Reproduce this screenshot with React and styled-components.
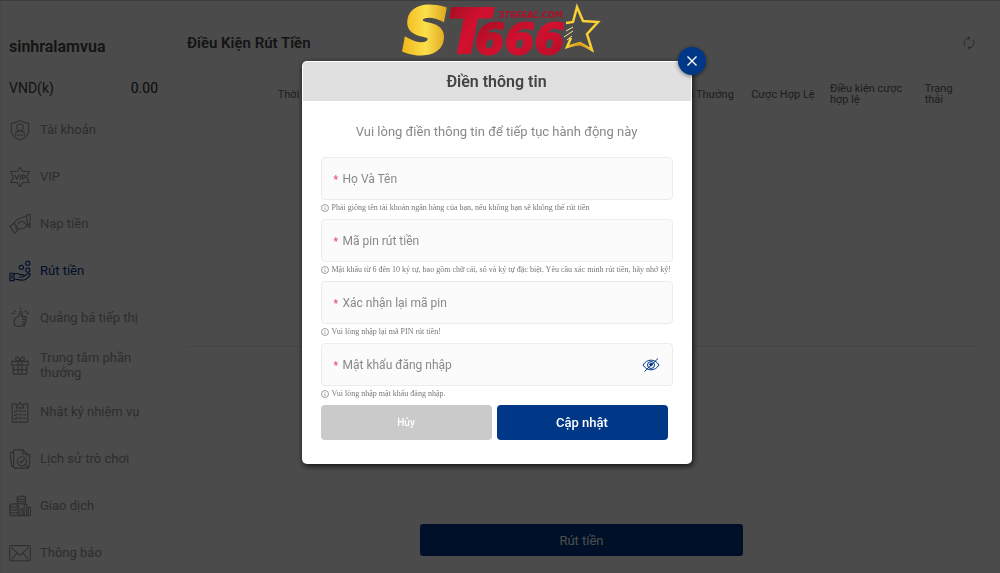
import React, { useState } from 'react';
import styled, { createGlobalStyle } from 'styled-components';

const GlobalStyle = createGlobalStyle`
  * {
    box-sizing: border-box;
  }

  body {
    margin: 0;
    background: #fafafa;
    font-family: Roboto, 'Noto Sans', sans-serif;
    font-size: 13px;
    color: #555;
  }

  button, input {
    font-family: inherit;
  }
`;

const Page = styled.div`
  display: flex;
  min-height: 100vh;
  border-top: 1px solid #ccc;
  border-left: 1px solid #eee;
`;

const Sidebar = styled.aside`
  width: 160px;
  flex-shrink: 0;
  padding: 36px 3px 0 8px;
`;

const UserName = styled.h2`
  margin: 0;
  font-size: 16px;
  font-weight: 600;
  line-height: 20px;
  color: #444;
`;

const Balance = styled.div`
  display: flex;
  justify-content: space-between;
  margin: 21px 0 8px;
  font-size: 14px;
  line-height: 20px;
  color: #444;
`;

const Amount = styled.span`
  color: #222;
`;

const NavLink = styled.a`
  display: flex;
  align-items: center;
  gap: 9px;
  height: 47px;
  font-size: 13px;
  line-height: 15px;
  text-decoration: none;
  color: ${(props) => (props.$active ? '#003787' : '#999')};

  svg {
    flex-shrink: 0;
  }
`;

const Main = styled.main`
  flex: 1;
  display: flex;
  flex-direction: column;
  padding: 32px 24px 16px 26px;
`;

const TitleBar = styled.div`
  display: flex;
  justify-content: space-between;
  align-items: center;
`;

const Title = styled.h1`
  margin: 0;
  font-size: 15px;
  font-weight: 600;
  line-height: 20px;
  color: #444;
`;

const IconButton = styled.button`
  display: flex;
  padding: 0;
  border: 0;
  background: none;
  color: #666;
`;

const TableBox = styled.div`
  min-height: 264px;
  margin-top: 30px;
  border-bottom: 1px solid #e6e6e6;
`;

const Table = styled.table`
  width: 100%;
  table-layout: fixed;
  border-collapse: collapse;

  th {
    padding: 0 8px 0 0;
    font-size: 11px;
    font-weight: normal;
    line-height: 11px;
    text-align: left;
    color: #666;
  }
`;

const WithdrawButton = styled.button`
  width: 41%;
  height: 32px;
  margin: 177px auto 0;
  border: 0;
  border-radius: 3px;
  background: #003787;
  color: #fff;
  font-size: 13px;
`;

const Overlay = styled.div`
  position: fixed;
  inset: 0;
  display: flex;
  flex-direction: column;
  align-items: center;
  padding-top: 4px;
  overflow: auto;
  background: rgba(0, 0, 0, 0.7);
`;

const Dialog = styled.div`
  position: relative;
  width: 39%;
  min-width: 320px;
  margin: 4px 7px 0 0;
  padding: 1px 1px 24px;
  border-radius: 5px;
  background: #fff;
  box-shadow: 1px 2px 6px rgba(0, 0, 0, 0.8);
`;

const DialogTitle = styled.h2`
  margin: 0;
  border-radius: 4px 4px 0 0;
  background: #e0e0e0;
  font-size: 16px;
  font-weight: 600;
  line-height: 39px;
  text-align: center;
  color: #444;
`;

const CloseButton = styled.button`
  position: absolute;
  top: -14px;
  right: -14px;
  display: flex;
  align-items: center;
  justify-content: center;
  width: 28px;
  height: 28px;
  padding: 0;
  border: 0;
  border-radius: 50%;
  background: #003787;
  color: #fff;
  box-shadow: 0 1px 4px rgba(0, 0, 0, 0.5);
`;

const Form = styled.form`
  padding: 0 18px;
`;

const Intro = styled.p`
  margin: 21px 0 15px;
  font-size: 13px;
  line-height: 20px;
  text-align: center;
  color: #888;
`;

const Field = styled.div`
  display: flex;
  align-items: center;
  height: 43px;
  padding: 0 12px;
  border: 1px solid #ececec;
  border-radius: 4px;
  background: #fbfbfb;
`;

const Required = styled.label`
  width: 9px;
  padding-top: 3px;
  font-size: 10px;
  font-weight: bold;
  line-height: 10px;
  color: #e8506e;
`;

const TextInput = styled.input`
  flex: 1;
  min-width: 0;
  padding: 0;
  border: 0;
  outline: 0;
  background: none;
  font-size: 12px;
  color: #555;

  &::placeholder {
    color: #888;
    opacity: 1;
  }
`;

const EyeButton = styled(IconButton)`
  color: #003787;
`;

const Hint = styled.p`
  display: flex;
  align-items: center;
  gap: 3px;
  height: 19px;
  margin: 0;
  padding-bottom: 4px;
  font-family: 'Liberation Serif', serif;
  font-size: 8px;
  color: #777;
  white-space: nowrap;
`;

const Actions = styled.div`
  display: flex;
  gap: 5px;
  padding-right: 5px;
`;

const ActionButton = styled.button`
  flex: 1;
  height: 35px;
  border: 0;
  border-radius: 4px;
  background: ${(props) => (props.$primary ? '#003787' : '#cacaca')};
  color: #fff;
  font-size: ${(props) => (props.$primary ? '13px' : '10px')};
  font-weight: 500;
`;

const LogoSvg = styled.svg`
  flex-shrink: 0;
  overflow: visible;
`;

const Icon = ({ children, size = 22 }) => (
  <svg
    width={size}
    height={size}
    viewBox='0 0 24 24'
    fill='none'
    stroke='currentColor'
    strokeWidth='1.2'
    strokeLinecap='round'
    strokeLinejoin='round'
    aria-hidden='true'
  >
    {children}
  </svg>
);

const icons = {
  account: (
    <>
      <path d='M12 1.5c3 2.2 6.2 2.8 9.5 3.2v7.5c0 5-4 8.5-9.5 10.8C6.5 20.7 2.5 17.2 2.5 12.2V4.7C5.8 4.3 9 3.7 12 1.5z' />
      <circle cx='12' cy='9' r='3.5' />
      <path d='M7 17.5c0-3 2-4.5 5-4.5s5 1.5 5 4.5M9 17.5h6' />
    </>
  ),
  vip: (
    <>
      <path d='M12 1.5l3.2 4.5h7l-3 6 3 6h-7L12 22.5 8.8 18h-7l3-6-3-6h7z' />
      <path d='M6.5 10l2 4.5 2-4.5M12.5 10v4.5M14.5 14.5V10h1.7a1.5 1.5 0 0 1 0 3h-1.7' />
    </>
  ),
  deposit: (
    <>
      <path d='M1 15l4.5-4 5 6.5L6.5 22z' />
      <path d='M5.5 11c2-3.5 5-5 8.5-5.5l5-2.5M10.5 17.5c4 0 7.500-.5 9-4l3-1.5' />
      <path d='M10 12c1-2.5 3.5-3 6-2.5l3.5 4M19 3l1.5-1.5h2.5v14h-2z' />
      <path d='M7 15.5l1.5 2' />
    </>
  ),
  withdraw: (
    <>
      <circle cx='20.5' cy='3.5' r='2.3' />
      <circle cx='13.5' cy='8' r='2.3' />
      <circle cx='20.5' cy='11' r='2.3' />
      <path d='M1 14.5h4.5v8H1zM3.2 16.5v3.5' />
      <path d='M5.5 15.5c3-1.5 4.5-1 6.5.5h3c2 0 2 2.5 0 2.5h-4M16.5 17.5l4-2.5c2-1 3.5.5 2 2.2-3 3.3-5 4.8-8 4.8-3.5 0-6-1.5-9-1' />
    </>
  ),
  promote: (
    <>
      <path d='M8 11.5c2.5-1 4-3 4-5.5 0-2 2.5-1.5 2.5.5 0 1.5-.3 2.7-1 4h4c1.8 0 2 2.3.5 2.8 1 .7.8 2.2-.3 2.7.8.8.5 2-.5 2.5.3 1.2-.5 2.5-1.7 2.5H9.5c-2.5 0-4-2-4-5 0-2.5.8-3.8 2.5-4.5z' />
      <path d='M12.5 1v1.5M6 4l1.5 1.2M19 4l-1.5 1.2M3.5 7h2M19.5 7h2M14.5 13.5H18M14.5 16.2H18M14.5 19H17' />
    </>
  ),
  rewards: (
    <>
      <path d='M3 8h18v4H3zM4.5 12h15v10h-15zM10 8v14M14 8v14M4.5 17h15' />
      <path d='M12 8C8 8 6.5 5.5 7.5 4s4-.5 4.5 4c.5-4.5 3.5-5.5 4.5-4S16 8 12 8z' />
    </>
  ),
  missions: (
    <>
      <path d='M8 3H3.5v20h17V3H16M8 4.5h2L12 1l2 3.5h2v3H8z' />
      <path d='M6 11l1 1 2-2M6 15l1 1 2-2M6 19l1 1 2-2M11 11h3M16 11h2M11 15h3M16 15h2M11 19h3M16 19h2' />
    </>
  ),
  history: (
    <>
      <path d='M5 19.5V2h10l4.5 4.5V9M5 4.5L1 5.5l2 14.5h2M15 2v4.5h4.5M5 19.5C5 21 6 22 7.5 22H20c2 0 2-1.5 2-3l1-11.5-3-.5' />
      <circle cx='14' cy='14.5' r='5' />
      <path d='M12 14.5l1.5 1.5 3-3.5M18 18.5l3 3' />
    </>
  ),
  transactions: (
    <>
      <ellipse cx='13.5' cy='3' rx='4.5' ry='1.8' />
      <path d='M9 3v5c0 2.3 9 2.3 9 0V3M9 5.5c0 2.3 9 2.3 9 0' />
      <ellipse cx='5.5' cy='11.5' rx='4.5' ry='1.8' />
      <path d='M1 11.5V21c0 2.3 9 2.3 9 0v-9.5M1 14.7c0 2.3 9 2.3 9 0M1 17.9c0 2.3 9 2.3 9 0M10 22.5h13.5M12 22.5V15h2.8v7.5M16.5 22.5V10h2.8v12.5M21 22.5v-9h2.5v9' />
    </>
  ),
  messages: (
    <>
      <rect x='.7' y='4' width='22.6' height='16.5' rx='1.5' />
      <path d='M3 6.5l9 8 9-8M3 18.5L9 12M21 18.5L15 12' />
    </>
  ),
};

const navItems = [
  { icon: 'account', label: 'Tài khoản' },
  { icon: 'vip', label: 'VIP' },
  { icon: 'deposit', label: 'Nạp tiền' },
  { icon: 'withdraw', label: 'Rút tiền' },
  { icon: 'promote', label: 'Quảng bá tiếp thị' },
  { icon: 'rewards', label: 'Trung tâm phần thưởng' },
  { icon: 'missions', label: 'Nhật ký nhiệm vụ' },
  { icon: 'history', label: 'Lịch sử trò chơi' },
  { icon: 'transactions', label: 'Giao dịch' },
  { icon: 'messages', label: 'Thông báo' },
];

const fields = [
  {
    name: 'fullName',
    label: 'Họ Và Tên',
    hint: 'Phải giống tên tài khoản ngân hàng của bạn, nếu không bạn sẽ không thể rút tiền',
  },
  {
    name: 'pin',
    label: 'Mã pin rút tiền',
    hint: 'Mật khẩu từ 6 đến 10 ký tự, bao gồm chữ cái, số và ký tự đặc biệt. Yêu cầu xác minh rút tiền, hãy nhớ kỹ!',
  },
  {
    name: 'pinConfirm',
    label: 'Xác nhận lại mã pin',
    hint: 'Vui lòng nhập lại mã PIN rút tiền!',
  },
  {
    name: 'password',
    label: 'Mật khẩu đăng nhập',
    hint: 'Vui lòng nhập mật khẩu đăng nhập.',
    secret: true,
  },
];

const initialValue = {
  fullName: '',
  pin: '',
  pinConfirm: '',
  password: '',
};

const Logo = () => (
  <LogoSvg width='204' height='53' viewBox='0 0 204 53' role='img' aria-label='ST666'>
    <defs>
      <linearGradient id='gold' x1='0' y1='0' x2='1' y2='0'>
        <stop offset='0' stopColor='#f2b81c' />
        <stop offset='.5' stopColor='#fbe04c' />
        <stop offset='1' stopColor='#dfa31c' />
      </linearGradient>
      <linearGradient id='red' x1='0' y1='0' x2='1' y2='1'>
        <stop offset='0' stopColor='#a00d20' />
        <stop offset='.5' stopColor='#d3102f' />
        <stop offset='1' stopColor='#b30d26' />
      </linearGradient>
    </defs>
    <g fontFamily='DejaVu Sans' fontWeight='bold' fontStyle='italic'>
      <text x='50' y='49' fontSize='60' fill='url(#red)' stroke='url(#red)' strokeWidth='3'>T</text>
      <text x='6' y='48' fontSize='60' fill='url(#gold)' stroke='url(#gold)' strokeWidth='5'>S</text>
      <text x='77' y='50' fontSize='43' fill='url(#red)' stroke='url(#red)' strokeWidth='2'>666</text>
      <text x='101' y='14' fontSize='8' fill='#b30d26'>ST666AC.COM</text>
    </g>
    <path
      d='M168 19l7-1L179 3l6 14 15 1-11 12 5 16-12-7-13 4 4-9'
      fill='none'
      stroke='#f8d033'
      strokeWidth='2.5'
    />
    <path d='M169 43l13-5 12 8-12-4.5z' fill='#e0a21a' />
    <path d='M166 33l9-6M168 27l7-4M169 36l5-4' stroke='#fbe88a' strokeWidth='1' />
  </LogoSvg>
);

const InfoIcon = () => (
  <svg width='8' height='8' viewBox='0 0 16 16' fill='none' stroke='currentColor' strokeWidth='1.4' aria-hidden='true'>
    <circle cx='8' cy='8' r='7' />
    <path d='M8 7v5M8 4v1.5' />
  </svg>
);

const App = () => {
  const [inputValue, setInputValue] = useState(initialValue);
  const [open, setOpen] = useState(true);
  const [visible, setVisible] = useState(false);

  const onChange = (e) => {
    setInputValue({ ...inputValue, [e.target.name]: e.target.value });
  };

  const onSubmit = (e) => {
    e.preventDefault();
  };

  return (
    <>
      <GlobalStyle />
      <Page>
        <Sidebar>
          <UserName>sinhralamvua</UserName>
          <Balance>
            <span>VND(k)</span>
            <Amount>0.00</Amount>
          </Balance>
          <nav>
            {navItems.map((item) => (
              <NavLink key={item.icon} href='#' $active={item.icon === 'withdraw'}>
                <Icon>{icons[item.icon]}</Icon>
                {item.label}
              </NavLink>
            ))}
          </nav>
        </Sidebar>
        <Main>
          <TitleBar>
            <Title>Điều Kiện Rút Tiền</Title>
            <IconButton type='button' aria-label='Refresh'>
              <Icon size={14}>
                <path d='M4.5 17A9 9 0 0 1 13 3.5M10.5.8l3 2.7-3 2.7' />
                <path d='M19.5 7A9 9 0 0 1 11 20.5M13.5 23.2l-3-2.7 3-2.7' />
              </Icon>
            </IconButton>
          </TitleBar>
          <TableBox>
            <Table>
              <colgroup>
                <col style={{ width: '11.5%' }} />
                <col style={{ width: '50%' }} />
                <col style={{ width: '10%' }} />
                <col style={{ width: '10%' }} />
                <col style={{ width: '12%' }} />
                <col />
              </colgroup>
              <thead>
                <tr>
                  <th />
                  <th>Thời Gian</th>
                  <th>Tiền Thưởng</th>
                  <th>Cược Hợp Lệ</th>
                  <th>Điều kiện cược hợp lệ</th>
                  <th>Trạng thái</th>
                </tr>
              </thead>
            </Table>
          </TableBox>
          <WithdrawButton type='button'>Rút tiền</WithdrawButton>
        </Main>
      </Page>
      {open && (
        <Overlay>
          <Logo />
          <Dialog role='dialog' aria-labelledby='dialog-title'>
            <DialogTitle id='dialog-title'>Điền thông tin</DialogTitle>
            <CloseButton type='button' aria-label='Close' onClick={() => setOpen(false)}>
              <svg width='10' height='10' viewBox='0 0 10 10' stroke='currentColor' strokeWidth='1.4' aria-hidden='true'>
                <path d='M.5.5l9 9M9.5.5l-9 9' />
              </svg>
            </CloseButton>
            <Form onSubmit={onSubmit}>
              <Intro>Vui lòng điền thông tin để tiếp tục hành động này</Intro>
              {fields.map((field) => (
                <React.Fragment key={field.name}>
                  <Field>
                    <Required htmlFor={field.name}>*</Required>
                    <TextInput
                      id={field.name}
                      type={field.secret && !visible ? 'password' : 'text'}
                      name={field.name}
                      aria-label={field.label}
                      placeholder={field.label}
                      value={inputValue[field.name]}
                      onChange={onChange}
                    />
                    {field.secret && (
                      <EyeButton type='button' aria-label='Show password' onClick={() => setVisible(!visible)}>
                        <svg width='18' height='14' viewBox='0 0 18 14' fill='none' stroke='currentColor' aria-hidden='true'>
                          <path d='M1 7c4-6.5 12-6.5 16 0-4 6.5-12 6.5-16 0z' />
                          <circle cx='9' cy='7' r='3.5' />
                          <circle cx='9' cy='6.5' r='1.3' fill='currentColor' />
                          <path d='M2.5 13.5L16 .5' />
                        </svg>
                      </EyeButton>
                    )}
                  </Field>
                  <Hint>
                    <InfoIcon />
                    {field.hint}
                  </Hint>
                </React.Fragment>
              ))}
              <Actions>
                <ActionButton type='button' onClick={() => setOpen(false)}>Hủy</ActionButton>
                <ActionButton type='submit' $primary>Cập nhật</ActionButton>
              </Actions>
            </Form>
          </Dialog>
        </Overlay>
      )}
    </>
  );
};

export default App;
